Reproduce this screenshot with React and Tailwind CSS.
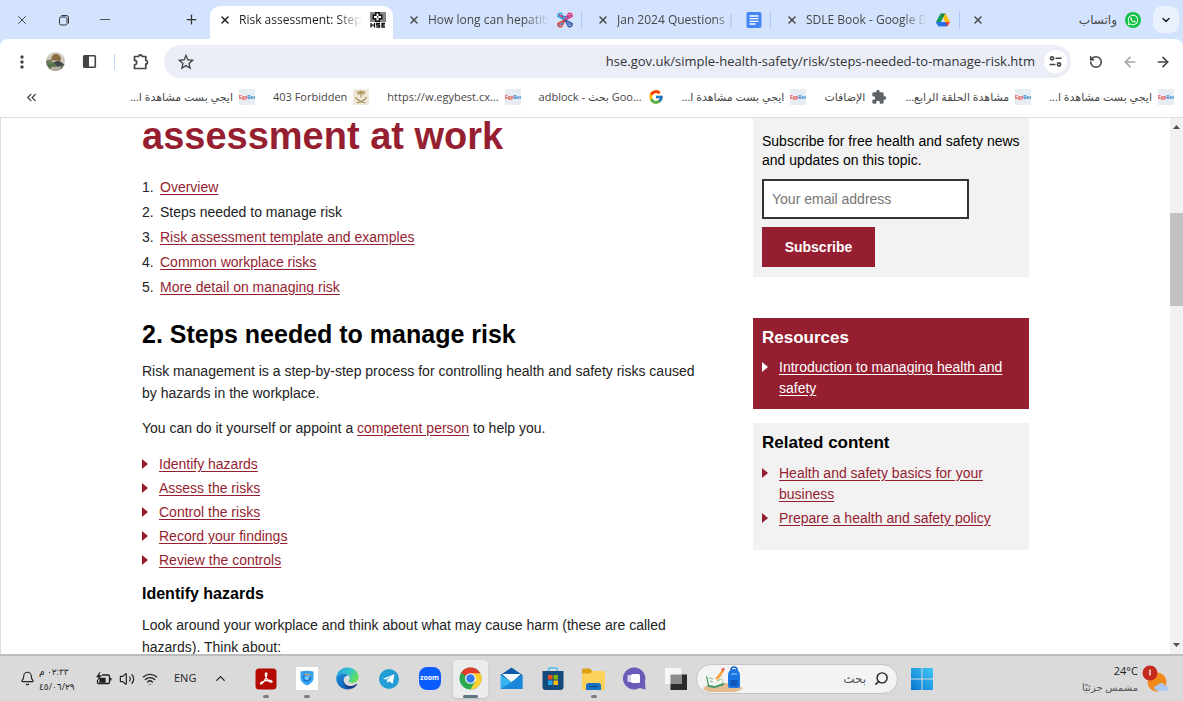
import React, { useState } from 'react';
import { ArrowLeft, ArrowRight, Bell, ChevronDown, ChevronUp, ChevronsLeft, Plus, RotateCcw, Search, Volume2, Wifi, X } from 'lucide-react';
import { FcGoogle } from 'react-icons/fc';
import { FaWhatsapp } from 'react-icons/fa';
import { MdExtension, MdMoreVert, MdStarOutline } from 'react-icons/md';

// ---------- Favicons ----------

const HseIcon = () => (
  <svg className="h-4 w-4 shrink-0" viewBox="0 0 16 16">
    <path d="M0 .5h16v1H0zM0 2.5h16v1H0zM0 4.5h16v1H0zM0 6.5h16v1H0zM0 8.5h16v1H0z" fill="#111" />
    <path d="M5 0h5v2.500h2.500v5H10V10H5V7.500H2.500v-5H5z" fill="#111" />
    <path d="M6.500 1.500h2v2.500h2.500v2H8.500v2.500h-2V6H4V4h2.500z" fill="#fff" />
    <path d="M7 4.300h1.200v1.400H7z" fill="#111" />
    <path d="M1 11v4.500M4.500 11v4.500M1 13.200h3.500M10 11.500H6.700v1.700H9.500v1.800H6.300M15 11.500h-3v3.500h3M12 13.200h2.700" fill="none" stroke="#111" strokeWidth="1.300" />
  </svg>
);

const KnotIcon = () => (
  <svg className="h-4 w-4 shrink-0" viewBox="0 0 16 16" fill="none" strokeWidth="1.500">
    <path d="M8 8 4.500 1.500C2 .5.500 2 1 4.500L8 8" stroke="#2aa7df" />
    <path d="m8 8 3.500-6.500C14 .5 15.500 2 15 4.500L8 8" stroke="#e03a8c" />
    <path d="m8 8-7 3.500c-.5 2.500 1 4 3.500 3L8 8" stroke="#d9402f" />
    <path d="m8 8 7 3.500c.5 2.500-1 4-3.500 3L8 8" stroke="#3a55a5" />
    <path d="m2 3 4 2M14 3l-4 2" stroke="#c3376b" />
    <path d="m2 13 4-2m8 2-4-2M5 6.500l3-2 3 2" stroke="#5a78c0" />
  </svg>
);

const DocsIcon = () => (
  <svg className="h-4 w-4 shrink-0" viewBox="0 0 16 16">
    <rect x=".5" width="15" height="16" rx="2" fill="#4285f4" />
    <path d="M3.500 4h9M3.500 6.700h9M3.500 9.400h9M3.500 12h6" stroke="#fff" strokeWidth="1.300" />
  </svg>
);

const DriveIcon = () => (
  <svg className="h-4 w-4 shrink-0" viewBox="0 0 16 16">
    <path d="M5.500 1.500 8 6 3.500 14.200 1 10z" fill="#0f9d58" />
    <path d="M5.500 1.500h5L8 6z" fill="#188038" />
    <path d="m10.500 1.500 4.500 8.500h-4.700L8 6z" fill="#fbbc04" />
    <path d="M1 10h9.500l-2.300 4.200H3.500z" fill="#4285f4" />
    <path d="M10.300 10H15l-2.500 4.200H8z" fill="#ea4335" />
    <path d="M3.300 10h6.900L12.300 14.200H3.500L1 10z" fill="#2b6fe8" />
  </svg>
);

const WhatsAppIcon = () => (
  <span className="flex h-4 w-4 shrink-0 items-center justify-center rounded-full bg-[#12c245] text-white">
    <FaWhatsapp className="h-3 w-3" />
  </span>
);

const EgyBestIcon = () => (
  <svg className="h-4 w-4 shrink-0" viewBox="0 0 16 16">
    <rect width="16" height="16" fill="#e8edf3" />
    <text x="0" y="9.500" fontSize="4.500" fontWeight="700" fontFamily="Liberation Sans, sans-serif" fill="#e23b2e">
      Egy<tspan fill="#1f82c9">Best</tspan>
    </text>
  </svg>
);

const EmblemIcon = () => (
  <svg className="h-4 w-4 shrink-0" viewBox="0 0 16 16">
    <rect width="16" height="16" fill="#f1eadb" />
    <g fill="none" stroke="#a8935c" strokeWidth="1.200">
      <path d="M8 8.500V4M8 4C6 1.500 4.500 2.500 4 4.500M8 4c2-2.500 3.500-1.500 4 .5M8 4C6.500 3.500 5.500 4.500 5.500 6M8 4c1.500-.5 2.500.5 2.500 2" />
      <path d="M2.500 8c1 3.500 5 4.500 10 6M13.500 8c-1 3.500-5 4.500-10 6" />
    </g>
    <circle cx="8" cy="3" r="1.500" fill="#a8935c" />
  </svg>
);

// ---------- Data ----------

const tabs = [
  { title: 'How long can hepatitis C', icon: <KnotIcon /> },
  { title: 'Jan 2024 Questions | تجميعات', icon: <DocsIcon /> },
  { title: 'SDLE Book - Google Drive', icon: <DriveIcon /> },
];

const bookmarks = [
  { label: 'ايجي بست مشاهدة ا...', dir: 'rtl', icon: <EgyBestIcon /> },
  { label: '403 Forbidden', dir: 'ltr', icon: <EmblemIcon /> },
  { label: 'https://w.egybest.cx...', dir: 'ltr', icon: <EgyBestIcon /> },
  { label: 'adblock - بحث Goo...', dir: 'ltr', icon: <FcGoogle className="h-4 w-4 shrink-0" /> },
  { label: 'ايجي بست مشاهدة ا...', dir: 'rtl', icon: <EgyBestIcon /> },
  { label: 'الإضافات', dir: 'rtl', icon: <MdExtension className="h-4 w-4 shrink-0 text-[#5f6368]" /> },
  { label: 'مشاهدة الحلقة الرابع...', dir: 'rtl', icon: <EgyBestIcon /> },
  { label: 'ايجي بست مشاهدة ا...', dir: 'rtl', icon: <EgyBestIcon /> },
];

const chapters = [
  'Overview',
  'Steps needed to manage risk',
  'Risk assessment template and examples',
  'Common workplace risks',
  'More detail on managing risk',
];

const steps = [
  'Identify hazards',
  'Assess the risks',
  'Control the risks',
  'Record your findings',
  'Review the controls',
];

// ---------- Browser ----------

const TabStrip = () => (
  <div className="flex h-[39px] items-end bg-[#d3e3fd] text-[12px] text-[#474747]">
    <div className="flex h-full w-[210px] shrink-0 items-center pl-[15px] text-[#333]">
      <button aria-label="Close window" className="w-[42px]"><X className="h-[14px] w-[14px]" strokeWidth={1.5} /></button>
      <button aria-label="Restore window" className="w-[43px]">
        <svg className="h-[14px] w-[14px]" viewBox="0 0 14 14" fill="none" stroke="currentColor">
          <rect x="2.500" y="4" width="7.500" height="8" rx="1.500" />
          <path d="M4.500 2.500H9.500a2 2 0 0 1 2 2v6" />
        </svg>
      </button>
      <button aria-label="Minimise window" className="w-[84px]"><span className="block h-px w-[10px] bg-[#555]" /></button>
      <button aria-label="New tab"><Plus className="h-[15px] w-[15px]" strokeWidth={2} /></button>
    </div>

    <div className="flex h-[33px] w-[183px] shrink-0 items-center gap-2 rounded-t-[10px] bg-white pr-[7px] pb-[5px] pl-[9px] text-[#1f1f1f]">
      <button aria-label="Close tab"><X className="h-3 w-3" strokeWidth={3} /></button>
      <span className="min-w-0 flex-1 overflow-hidden whitespace-nowrap [mask-image:linear-gradient(to_right,black_80%,transparent)]">
        Risk assessment: Steps needed
      </span>
      <HseIcon />
    </div>

    {tabs.map((tab) => (
      <div key={tab.title} className="flex h-[33px] w-[189px] shrink-0 items-center gap-2 pb-[5px] pl-[15px]">
        <button aria-label="Close tab"><X className="h-3 w-3" strokeWidth={3} /></button>
        <span className="min-w-0 flex-1 overflow-hidden whitespace-nowrap [mask-image:linear-gradient(to_right,black_80%,transparent)]">
          {tab.title}
        </span>
        {tab.icon}
        <span className="h-4 w-px bg-[#a8c7fa]" />
      </div>
    ))}

    <div className="flex h-[33px] min-w-0 flex-1 items-center gap-2 pr-3 pb-[5px] pl-3">
      <button aria-label="Close tab"><X className="h-3 w-3" strokeWidth={3} /></button>
      <span dir="rtl" className="flex-1">واتساب</span>
      <WhatsAppIcon />
    </div>
    <button aria-label="Search tabs" className="mr-1 mb-[6px] flex h-[27px] w-[26px] items-center justify-center rounded-[9px] bg-[#eaf1fe] text-[#1f1f1f]">
      <ChevronDown className="h-3 w-3" strokeWidth={3} />
    </button>
  </div>
);

const Toolbar = () => (
  <div className="flex h-[45px] items-center rounded-t-[8px] bg-white pr-3 pl-3 text-[#444]">
    <button aria-label="Menu" className="mr-[14px]"><MdMoreVert className="h-5 w-5" /></button>
    <button aria-label="Profile" className="mr-[17px]">
      <svg className="h-[19px] w-[19px]" viewBox="0 0 18 18">
        <defs><clipPath id="avatar"><circle cx="9" cy="9" r="9" /></clipPath></defs>
        <g clipPath="url(#avatar)">
          <rect width="18" height="18" fill="#cfc9c0" />
          <path d="M5 7a4.500 4.500 0 0 1 9-1v2H5z" fill="#8b6a3d" />
          <path d="M0 8l4-1 3 3 5-2 6 4v6H0z" fill="#6f7b5d" />
          <path d="M7 10l5-2 5 4-6 2z" fill="#3f4548" />
          <path d="M1 12l5-1 4 3-3 3z" fill="#4f7040" />
          <path d="M5 14h9v4H4z" fill="#b5ada5" />
        </g>
      </svg>
    </button>
    <button aria-label="Side panel" className="mr-[17px]">
      <svg className="h-[15px] w-[15px]" viewBox="0 0 15 15">
        <rect x="1.700" y="1.700" width="11.600" height="11.600" rx=".8" fill="none" stroke="currentColor" strokeWidth="1.600" />
        <path d="M2 2h5v11H2z" fill="currentColor" />
      </svg>
    </button>
    <span className="mr-[17px] h-4 w-px bg-[#c2d8fb]" />
    <button aria-label="Extensions" className="mr-[14px]">
      <svg className="h-[18px] w-[18px]" viewBox="0 0 18 18" fill="none" stroke="currentColor" strokeWidth="1.700" strokeLinejoin="round">
        <path d="M2.500 3.500H6.700a1.700 1.700 0 0 1 3.400 0h3.700v4a1.700 1.700 0 0 1 0 3.400v4.600H2.500v-3.700a2.200 2.200 0 0 0 0-4.400z" />
      </svg>
    </button>

    <div className="flex h-[33px] min-w-0 flex-1 items-center rounded-full bg-[#ebeef7] pr-1 pl-3">
      <button aria-label="Bookmark this page"><MdStarOutline className="h-5 w-5" /></button>
      <input
        aria-label="Address"
        className="min-w-0 flex-1 bg-transparent pr-[9px] text-right text-[13px] text-[#333] outline-none"
        defaultValue="hse.gov.uk/simple-health-safety/risk/steps-needed-to-manage-risk.htm"
      />
      <button aria-label="Site information" className="flex h-[23px] w-[23px] items-center justify-center rounded-full bg-white">
        <svg className="h-[13px] w-[13px]" viewBox="0 0 13 13" fill="none" stroke="currentColor" strokeWidth="1.600">
          <circle cx="3" cy="3.300" r="1.600" />
          <path d="M6.500 3.300h6M.5 9.500h6" />
          <circle cx="10" cy="9.500" r="1.600" />
        </svg>
      </button>
    </div>

    <button aria-label="Reload" className="ml-[18px]"><RotateCcw className="h-[14px] w-[14px]" strokeWidth={2.7} /></button>
    <button aria-label="Forward" className="ml-[19px] text-[#a5a5a5]"><ArrowLeft className="h-4 w-4" strokeWidth={2.5} /></button>
    <button aria-label="Back" className="ml-[17px]"><ArrowRight className="h-4 w-4" strokeWidth={2.5} /></button>
  </div>
);

const BookmarksBar = () => (
  <div className="flex h-[34px] items-center border-b border-[#dedede] bg-white pr-[9px] pb-[7px] pl-6 text-[11px] text-[#474747]">
    <button aria-label="More bookmarks"><ChevronsLeft className="h-[15px] w-[15px]" strokeWidth={2.2} /></button>
    <div className="flex flex-1 justify-end gap-[18px]">
      {bookmarks.map((item, index) => (
        <a key={index} href="#" className="flex items-center gap-[6px] whitespace-nowrap">
          <span dir={item.dir}>{item.label}</span>
          {item.icon}
        </a>
      ))}
    </div>
  </div>
);

// ---------- Page ----------

const linkClass = 'text-[#951e31] underline underline-offset-2';

const Arrow = ({ className }) => (
  <svg className={`h-[10px] w-[6px] shrink-0 ${className}`} viewBox="0 0 6 10" fill="currentColor">
    <path d="M0 0l6 5-6 5z" />
  </svg>
);

const Article = () => (
  <main className="min-w-0 flex-1">
    <h1 className="text-[38px] leading-[39px] font-bold text-[#951e31]">Managing risks and risk assessment at work</h1>
    <ol className="mt-[19px] text-[14px] leading-[25px]">
      {chapters.map((chapter, index) => (
        <li key={chapter} className="flex">
          <span className="w-[18px]">{index + 1}.</span>
          {index === 1 ? chapter : <a href="#" className={linkClass}>{chapter}</a>}
        </li>
      ))}
    </ol>

    <h2 className="mt-[19px] text-[25px] leading-[30px] font-bold text-black">2. Steps needed to manage risk</h2>
    <p className="mt-[11px] text-[14px] leading-[22px]">
      Risk management is a step-by-step process for controlling health and safety risks caused by hazards in the workplace.
    </p>
    <p className="mt-[13px] text-[14px] leading-[22px]">
      You can do it yourself or appoint a <a href="#" className={linkClass}>competent person</a> to help you.
    </p>
    <ul className="mt-[13px] text-[14px] leading-[24px]">
      {steps.map((step) => (
        <li key={step} className="flex items-center gap-[11px]">
          <Arrow className="text-[#951e31]" />
          <a href="#" className={linkClass}>{step}</a>
        </li>
      ))}
    </ul>

    <h3 className="mt-[11px] text-[16px] leading-[22px] font-bold text-black">Identify hazards</h3>
    <p className="mt-[9px] text-[14px] leading-[22px]">
      Look around your workplace and think about what may cause harm (these are called hazards). Think about:
    </p>
  </main>
);

const Sidebar = () => {
  const [email, setEmail] = useState('');

  return (
    <aside className="w-[276px] shrink-0 text-[14px]">
      <form className="bg-[#f2f2f2] px-[9px] pt-[54px] pb-[10px]" onSubmit={(e) => e.preventDefault()}>
        <label htmlFor="email" className="block leading-[19px] text-black">
          Subscribe for free health and safety news and updates on this topic.
        </label>
        <input
          id="email"
          type="email"
          placeholder="Your email address"
          value={email}
          onChange={(e) => setEmail(e.target.value)}
          className="mt-[9px] block h-10 w-[207px] border-2 border-[#333] bg-white px-2 placeholder:text-[#757575]"
        />
        <button type="submit" className="mt-2 block h-10 w-[113px] bg-[#951e31] font-bold text-white">Subscribe</button>
      </form>

      <section className="mt-[41px] bg-[#951e31] px-[9px] pt-2 pb-[10px] text-white">
        <h2 className="text-[17px] leading-[24px] font-bold">Resources</h2>
        <ul className="mt-[7px] leading-[21px]">
          <li className="flex gap-[11px]">
            <Arrow className="mt-[5px]" />
            <a href="#" className="underline underline-offset-2">Introduction to managing health and safety</a>
          </li>
        </ul>
      </section>

      <section className="mt-[14px] bg-[#f2f2f2] px-[9px] pt-2 pb-[21px]">
        <h2 className="text-[17px] leading-[24px] font-bold text-black">Related content</h2>
        <ul className="mt-2 flex flex-col gap-[3px] leading-[21px]">
          <li className="flex gap-[11px]">
            <Arrow className="mt-[5px] text-[#951e31]" />
            <a href="#" className={linkClass}>Health and safety basics for your business</a>
          </li>
          <li className="flex gap-[11px]">
            <Arrow className="mt-[5px] text-[#951e31]" />
            <a href="#" className={linkClass}>Prepare a health and safety policy</a>
          </li>
        </ul>
      </section>
    </aside>
  );
};

const ScrollBar = () => (
  <div className="flex w-[13px] shrink-0 flex-col items-center bg-[#f1f1f1] py-[7px] text-[#505050]">
    <svg className="h-1 w-[7px]" viewBox="0 0 7 4" fill="currentColor"><path d="M0 4l3.500-4L7 4z" /></svg>
    <span className="mt-[84px] h-[93px] w-full bg-[#c1c1c1]" />
    <svg className="mt-auto h-1 w-[7px]" viewBox="0 0 7 4" fill="currentColor"><path d="M0 0l3.500 4L7 0z" /></svg>
  </div>
);

// ---------- Taskbar ----------

const AcrobatIcon = () => (
  <svg className="h-[22px] w-[22px]" viewBox="0 0 22 22">
    <rect x=".5" y=".5" width="21" height="21" rx="3.500" fill="#b30b00" />
    <path d="M11.200 5c-1.400 0-1 2.800.3 5.200 1.200 2.300 3 4.200 4.800 4 1.400-.2.800-1.700-1.300-1.900-2.700-.2-6.400.7-8.500 2-1.600 1-1 2.300.4 1.300 2-1.500 4.400-6 4.900-8.700.2-1.200 0-1.900-.6-1.900z" fill="none" stroke="#fff" strokeWidth="1.300" />
  </svg>
);

const ShieldIcon = () => (
  <svg className="h-[23px] w-[22px]" viewBox="0 0 22 23">
    <rect width="22" height="23" fill="#fff" />
    <path d="M4.500 4.500Q11 3 17.500 4.500V11q0 5-6.500 7.500Q4.500 16 4.500 11z" fill="#35a3f0" />
    <path d="M8 8.500a4 4 0 0 1 6 .2" fill="none" stroke="#f0a13c" strokeWidth="1.200" />
    <path d="M14.500 10a4 4 0 0 1-7 2.500M7.500 11a3.500 3.500 0 0 1 1-3" fill="none" stroke="#1668c7" strokeWidth="1.300" />
    <circle cx="11" cy="11" r="2" fill="#7cc9ff" />
  </svg>
);

const EdgeIcon = () => (
  <svg className="h-[23px] w-[23px]" viewBox="0 0 24 24">
    <defs>
      <linearGradient id="edgeTop" x1="0" x2="1" y1="0" y2=".5">
        <stop offset="0" stopColor="#1b9de2" />
        <stop offset=".6" stopColor="#36c6c8" />
        <stop offset="1" stopColor="#66e05a" />
      </linearGradient>
      <linearGradient id="edgeSide" x1="0" x2="1" y1="0" y2="1">
        <stop offset="0" stopColor="#1d92e0" />
        <stop offset="1" stopColor="#0c4fa3" />
      </linearGradient>
    </defs>
    <path d="M.3 11C1 5 5.500.5 12 .5c7 0 11.500 4.700 11.500 10 0 4-3 6.200-6 6.200-2.600 0-4.200-1-4.200-1.900s1-1.300 1-3.200c0-2.400-2.500-4.700-6-4.700-3.700 0-7 1.600-8 4.100z" fill="url(#edgeTop)" />
    <path d="M.3 11c1-2.700 4.300-4.300 8-4.100 2 .1 3.700.9 4.700 2-3.700-.3-5.600 3-5 6.600.8 4.400 4.400 7 8 7.200-1.200.6-2.600.8-4 .8C5 23.500-.3 17.500.3 11z" fill="url(#edgeSide)" />
    <path d="M8.300 12.500c-1 5 3.700 8 8.200 7.300 2.200-.3 4-1.300 5-2 .6-.3.900.2.500.8-1.400 2-3.700 3.600-6 4.200C9.500 22.500 6.500 16.500 8.300 12.500z" fill="#123f86" />
  </svg>
);

const TelegramIcon = () => (
  <svg className="h-5 w-5" viewBox="0 0 20 20">
    <circle cx="10" cy="10" r="10" fill="#249cd4" />
    <path d="M4 9.800 15.500 5.200l-1.800 9.600-3.600-2.500-1.700 1.700-.4-3 4.500-4-5.600 3.600z" fill="#fff" />
  </svg>
);

const ZoomIcon = () => (
  <span className="flex h-[23px] w-[22px] items-center justify-center rounded-[8px] bg-[#0b5cff] font-['Open_Sans',sans-serif] text-[7px] font-bold text-white">
    zoom
  </span>
);

const ChromeIcon = () => (
  <svg className="h-[23px] w-[23px]" viewBox="0 0 24 24">
    <circle cx="12" cy="12" r="11.500" fill="#2da94f" />
    <path d="M12 12 2 6.300A11.500 11.500 0 0 1 22 6.300z" fill="#e33b2e" />
    <path d="M12 6.500h10.200A11.500 11.500 0 0 1 12 23.500L17 15z" fill="#fdd02f" />
    <path d="M2 6.300 7 15l5-3z" fill="#2da94f" />
    <circle cx="12" cy="12" r="5.600" fill="#fff" />
    <circle cx="12" cy="12" r="4.400" fill="#3079ed" />
  </svg>
);

const MailIcon = () => (
  <svg className="h-[23px] w-[23px]" viewBox="0 0 23 23">
    <path d="M.5 8 11.500.5l11 7.500-11 8z" fill="#0f5ba8" />
    <path d="M2.500 7.500h18L11.500 15z" fill="#fff" />
    <path d="M.5 8l11 6.500 11-6.500v14H.5z" fill="#36b4f0" />
    <path d="M2.500 7h18l-9 8z" fill="#f4f9fd" />
    <path d="M.5 22 22.500 8v14z" fill="#1b86da" />
    <path d="M2.500 7h18l-9 7.500z" fill="#f4f9fd" />
  </svg>
);

const StoreIcon = () => (
  <svg className="h-6 w-[22px]" viewBox="0 0 22 24">
    <path d="M6.500 4V2.200Q6.500 1 8 1h6q1.500 0 1.500 1.200V4" fill="none" stroke="#4cc0ee" strokeWidth="1.500" />
    <path d="M.5 4h21v16q0 3-3 3h-15q-3 0-3-3z" fill="#174a7c" />
    <path d="M6 8h4.500v4.500H6z" fill="#f25022" />
    <path d="M11.500 8H16v4.500h-4.500z" fill="#7fba00" />
    <path d="M6 13.500h4.500V18H6z" fill="#22a6f0" />
    <path d="M11.500 13.500H16V18h-4.500z" fill="#ffb900" />
  </svg>
);

const FolderIcon = () => (
  <svg className="h-[22px] w-[23px]" viewBox="0 0 23 22">
    <path d="M0 2Q0 .5 1.500.5H8L10 3h11q2 0 2 1.500V8H0z" fill="#dfa010" />
    <path d="M0 5.500h8.500L10.500 3H22q1 0 1 1.500V21q0 1-1 1H1q-1 0-1-1z" fill="#fdd25a" />
    <path d="M4 22v-4.500Q4 15 6.500 15h10q2.500 0 2.500 2.500V22z" fill="#1673c4" />
    <path d="M7.500 18.500h8" stroke="#0b4b87" strokeWidth="1.200" />
  </svg>
);

const ChatIcon = () => (
  <svg className="h-[23px] w-[23px]" viewBox="0 0 23 23">
    <path d="M11.500.5a11 11 0 0 1 10.500 14l.5 8-6-1.500A11 11 0 1 1 11.500.5z" fill="#6a5bb8" />
    <rect x="4.500" y="8" width="4" height="7" rx="1" fill="#d8d4f4" />
    <rect x="8" y="7" width="9" height="9" rx="1.500" fill="#fff" />
  </svg>
);

const TaskViewIcon = () => (
  <svg className="h-[22px] w-[22px]" viewBox="0 0 22 22">
    <path d="M5.500 6.500H22V22H5.500z" fill="#2b2b2b" />
    <path d="M0 0h16.500v16H0z" fill="#f6f6f6" />
    <path d="M5.500 6.500h11V16h-11z" fill="#8c8c8c" />
  </svg>
);

const apps = [
  { name: 'Acrobat', icon: <AcrobatIcon />, state: 'running' },
  { name: 'Shield', icon: <ShieldIcon />, state: 'running' },
  { name: 'Edge', icon: <EdgeIcon /> },
  { name: 'Telegram', icon: <TelegramIcon /> },
  { name: 'Zoom', icon: <ZoomIcon /> },
  { name: 'Chrome', icon: <ChromeIcon />, state: 'active' },
  { name: 'Mail', icon: <MailIcon /> },
  { name: 'Store', icon: <StoreIcon /> },
  { name: 'Explorer', icon: <FolderIcon />, state: 'running' },
  { name: 'Chat', icon: <ChatIcon /> },
  { name: 'Task view', icon: <TaskViewIcon /> },
];

const SchoolArt = () => (
  <svg className="h-[26px] w-10 shrink-0" viewBox="0 0 40 26">
    <path d="M0 22q10-7 20-5 12 0 20 5-4 4-10 4H7q-6-1-7-4z" fill="#e2bd92" />
    <path d="m3 10 8 2 7-4 3 11-9 3-7-1z" fill="#3f9a68" />
    <path d="m4 9 7 2 7-4 2 10-8 3-6-1z" fill="#f3f6ec" />
    <path d="m6 12 4 1m-3 2 3 1m3-4 4-2m-3 5 4-2" stroke="#8fa98d" />
    <path d="m12 13 7-9 2 1.500-6 8z" fill="#f6a13a" />
    <path d="m18 4 2-2.500 2 1.500-2 2.500z" fill="#ee5a4c" />
    <path d="M28 4q0-3 3-3t3 3" fill="none" stroke="#1766c4" strokeWidth="1.500" />
    <path d="M25 10q0-7 6-7t6 7v10q0 2-2 2h-8q-2 0-2-2z" fill="#1b74e4" />
    <path d="M27.500 14h7v6h-7z" fill="#1257b8" />
    <path d="M28 8h6" stroke="#64b4ff" strokeWidth="1.500" />
  </svg>
);

const Taskbar = () => (
  <footer className="flex h-[47px] shrink-0 items-center border-t-2 border-[#bcbcbc] bg-[#dadada] font-['Open_Sans','DejaVu_Sans',sans-serif] text-[11px] text-[#222]">
    <div className="flex w-[245px] shrink-0 items-center pl-5">
      <button aria-label="Notifications"><Bell className="h-[15px] w-[15px]" strokeWidth={1.8} /></button>
      <div dir="rtl" className="ml-1 w-[45px] text-[9px] leading-[15px] whitespace-nowrap">
        <div className="text-left">٠٢:٣٣ م</div>
        <div className="text-left">٤٥/٠٦/٢٩</div>
      </div>
      <button aria-label="Quick settings" className="ml-3 flex items-center gap-[7px]">
        <svg className="h-[14px] w-[16px]" viewBox="0 0 16 14" fill="none" stroke="currentColor" strokeWidth="1.300">
          <path d="M6 3h6.500q1 0 1 1v6.500q0 1-1 1h-10q-1 0-1-1V8" />
          <path d="M14.500 6v2.500" strokeWidth="2" />
          <path d="M4 10V6.500h5V10z" fill="currentColor" />
          <path d="M4 0 .5 5H3L1.500 8.500 5.500 3.500H3z" fill="currentColor" strokeWidth=".5" />
        </svg>
        <Volume2 className="h-4 w-4" strokeWidth={1.8} />
        <Wifi className="h-4 w-4" strokeWidth={2} />
      </button>
      <span className="ml-4">ENG</span>
      <button aria-label="Hidden icons" className="ml-[17px]"><ChevronUp className="h-[15px] w-[15px]" /></button>
    </div>

    {apps.map((app) => (
      <div key={app.name} className="flex h-full w-[41px] shrink-0 items-center justify-center">
        <button
          aria-label={app.name}
          className={`relative flex h-[38px] w-[35px] items-center justify-center rounded ${app.state === 'active' ? 'bg-[#ececec] shadow-sm' : ''}`}
        >
          {app.icon}
          {app.state === 'running' && <span className="absolute bottom-0 h-[3px] w-[6px] rounded-full bg-[#7d7d7d]" />}
          {app.state === 'active' && <span className="absolute bottom-0 h-[3px] w-[15px] rounded-full bg-[#5d7780]" />}
        </button>
      </div>
    ))}

    <div className="flex h-[30px] w-[202px] shrink-0 items-center rounded-full border border-[#c4c4c4] bg-[#f3f3f3] pr-2 pl-[6px]">
      <SchoolArt />
      <input aria-label="بحث" placeholder="بحث" dir="rtl" className="min-w-0 flex-1 bg-transparent pr-2 text-[12px] outline-none placeholder:text-[#555]" />
      <Search className="h-[15px] w-[15px] -scale-x-100" strokeWidth={2.3} />
    </div>
    <button aria-label="Start" className="ml-[13px]">
      <svg className="h-[22px] w-[22px]" viewBox="0 0 22 22">
        <defs>
          <linearGradient id="win" x1="1" x2="0" y1="0" y2="1">
            <stop offset="0" stopColor="#42c8f7" />
            <stop offset="1" stopColor="#0574d0" />
          </linearGradient>
        </defs>
        <path d="M0 0h10.500v10.500H0zM11.500 0H22v10.500H11.500zM0 11.500h10.500V22H0zM11.500 11.500H22V22H11.500z" fill="url(#win)" />
      </svg>
    </button>

    <div className="ml-auto flex items-center gap-1 pr-[14px]">
      <div className="text-right leading-4">
        <div>24°C</div>
        <div dir="rtl" className="text-left text-[10px] text-[#555]">مشمس جزئيًا</div>
      </div>
      <svg className="h-[28px] w-[27px]" viewBox="0 0 27 28">
        <circle cx="15" cy="17" r="9.500" fill="#f18a1c" />
        <path d="M14 25q-3-1-1-4 2-1 3-.5 1-3 4-2.500 2.500.5 3 3 3 0 3 2.500t-3 2.500h-6q-2 0-3-1z" fill="#a9c8f5" />
        <circle cx="8" cy="8" r="7.500" fill="#c42b1c" />
        <path d="M8 4.500v6" stroke="#fff" strokeWidth="1.300" />
      </svg>
    </div>
  </footer>
);

const App = () => (
  <div className="flex h-screen flex-col overflow-hidden bg-white">
    <header className="shrink-0 bg-[#d3e3fd] font-['Open_Sans','DejaVu_Sans',sans-serif]">
      <TabStrip />
      <Toolbar />
      <BookmarksBar />
    </header>
    <div className="flex min-h-0 flex-1 overflow-hidden border-l border-[#dcdcdc] font-['Liberation_Sans',Arial,sans-serif] text-[#222]">
      <div className="min-w-0 flex-1 overflow-hidden">
        <div className="mx-auto -mt-[40px] flex max-w-[887px] gap-10">
          <Article />
          <Sidebar />
        </div>
      </div>
      <ScrollBar />
    </div>
    <Taskbar />
  </div>
);

export default App;
